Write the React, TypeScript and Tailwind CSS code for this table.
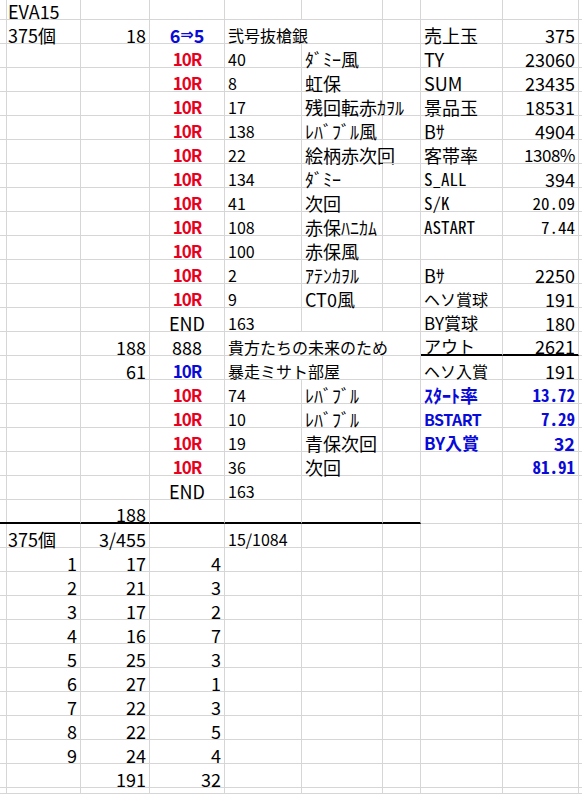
import type { ReactNode } from "react";

type Align = "l" | "r" | "c";
type Cell = { c: number; t: ReactNode; a?: Align; s?: number; k?: string };

const RED = "text-[#e8001c] font-bold text-[17px] tracking-[-1px]";
const BLUE = "text-[#0a0ad8] font-bold";
const SM = "text-[16px]";
const MONO = "font-['Noto_Sans_Mono_CJK_JP','DejaVu_Sans_Mono',monospace] text-[17px]";

const cols = ["w-[5px]", "w-[76px]", "w-[69px]", "w-[75px]", "w-[77px]", "w-[81px]", "w-[38px]", "w-[82px]", "w-[76px]", "w-[3px]"];
const spans: Record<number, string> = { 2: "col-span-2", 3: "col-span-3" };

const r10 = (num: string, name: string, label = "", value = "", blue = false, lk = "", vk = ""): Cell[] => [
  { c: 3, t: "10R", a: "c", k: RED },
  { c: 4, t: num, k: SM },
  { c: 5, t: name },
  { c: 7, t: label, k: (blue ? BLUE + " " : "") + lk },
  { c: 8, t: value, a: "r", k: (blue ? BLUE + " " : "") + vk },
];

const rows: { cells: Cell[]; line?: "gh" | "left"; h?: string }[] = [
  { cells: [{ c: 1, t: "EVA15" }], h: "h-[20px]" },
  {
    cells: [
      { c: 1, t: "375個" },
      { c: 2, t: "18", a: "r" },
      {
        c: 3,
        t: (
          <>
            6<span className="font-['DejaVu_Sans',sans-serif] text-[16px]">⇒</span>5
          </>
        ),
        a: "c",
        k: BLUE,
      },
      { c: 4, t: "弐号抜槍銀", s: 2, k: SM },
      { c: 7, t: "売上玉" },
      { c: 8, t: "375", a: "r" },
    ],
  },
  { cells: r10("40", "ﾀﾞﾐｰ風", "TY", "23060") },
  { cells: r10("8", "虹保", "SUM", "23435") },
  { cells: r10("17", "残回転赤ｶｦﾙ", "景品玉", "18531") },
  { cells: r10("138", "ﾚﾊﾞﾌﾞﾙ風", "Bｻ", "4904") },
  { cells: r10("22", "絵柄赤次回", "客帯率", "1308%", false, "", "text-[17px] tracking-[-0.5px]") },
  { cells: r10("134", "ﾀﾞﾐｰ", "S_ALL", "394", false, MONO) },
  { cells: r10("41", "次回", "S/K", "20.09", false, MONO, MONO) },
  { cells: r10("108", "赤保ﾊﾆｶﾑ", "ASTART", "7.44", false, MONO, MONO) },
  { cells: r10("100", "赤保風") },
  { cells: r10("2", "ｱﾃﾝｶｦﾙ", "Bｻ", "2250") },
  { cells: r10("9", "CT0風", "ヘソ賞球", "191", false, SM) },
  {
    cells: [
      { c: 3, t: "END", a: "c" },
      { c: 4, t: "163", k: SM },
      { c: 7, t: "BY賞球", k: "text-[17px]" },
      { c: 8, t: "180", a: "r" },
    ],
  },
  {
    cells: [
      { c: 2, t: "188", a: "r" },
      { c: 3, t: "888", a: "c" },
      { c: 4, t: "貴方たちの未来のため", s: 3, k: SM },
      { c: 7, t: "アウト", k: "text-[17px]" },
      { c: 8, t: "2621", a: "r" },
    ],
    line: "gh",
  },
  {
    cells: [
      { c: 2, t: "61", a: "r" },
      { c: 3, t: "10R", a: "c", k: "text-[#0a0ad8] font-bold text-[17px] tracking-[-1px]" },
      { c: 4, t: "暴走ミサト部屋", s: 2, k: SM },
      { c: 7, t: "ヘソ入賞", k: SM },
      { c: 8, t: "191", a: "r" },
    ],
  },
  { cells: r10("74", "ﾚﾊﾞﾌﾞﾙ", "ｽﾀｰﾄ率", "13.72", true, "", MONO) },
  { cells: r10("10", "ﾚﾊﾞﾌﾞﾙ", "BSTART", "7.29", true, "text-[16px] tracking-[-0.5px]", MONO) },
  { cells: r10("19", "青保次回", "BY入賞", "32", true, "text-[17px]") },
  { cells: r10("36", "次回", "", "81.91", true, "", MONO) },
  {
    cells: [
      { c: 3, t: "END", a: "c" },
      { c: 4, t: "163", k: SM },
    ],
  },
  { cells: [{ c: 2, t: "188", a: "r" }], line: "left" },
  {
    cells: [
      { c: 1, t: "375個" },
      { c: 2, t: "3/455", a: "r" },
      { c: 4, t: "15/1084", k: SM },
    ],
  },
  ...[
    ["1", "17", "4"],
    ["2", "21", "3"],
    ["3", "17", "2"],
    ["4", "16", "7"],
    ["5", "25", "3"],
    ["6", "27", "1"],
    ["7", "22", "3"],
    ["8", "22", "5"],
    ["9", "24", "4"],
  ].map(([n, a, b]) => ({
    cells: [
      { c: 1, t: n, a: "r" as Align },
      { c: 2, t: a, a: "r" as Align },
      { c: 3, t: b, a: "r" as Align },
    ],
  })),
  {
    cells: [
      { c: 2, t: "191", a: "r" },
      { c: 3, t: "32", a: "r" },
    ],
  },
  { cells: [], h: "h-[6px]" },
];

function Row({ cells, line, h }: { cells: Cell[]; line?: "gh" | "left"; h?: string }) {
  const out = [];
  let col = 0;
  while (col < cols.length) {
    const cell = cells.find((x) => x.c === col);
    const span = cell?.s ?? 1;
    const dark = (line === "gh" && (col === 7 || col === 8)) || (line === "left" && col <= 6);
    const align = cell?.a === "r" ? "justify-end" : cell?.a === "c" ? "justify-center" : "justify-start";
    out.push(
      <div
        key={col}
        className={`flex items-end ${align} ${span > 1 ? spans[span] : ""} border-r border-[#d6d6d6] ${
          dark ? "border-b-2 border-b-black" : "border-b"
        } px-[3px] pb-[1px] whitespace-nowrap overflow-visible leading-[14px] ${cell?.k ?? ""}`}
      >
        {cell?.t}
      </div>
    );
    col += span;
  }
  return <div className={`grid grid-cols-[5px_76px_69px_75px_77px_81px_38px_82px_76px_3px] ${h ?? "h-[24px]"}`}>{out}</div>;
}

export default function App() {
  return (
    <div className="w-[582px] h-[794px] overflow-hidden bg-white text-black text-[18px] font-['Noto_Sans_CJK_JP',sans-serif]">
      {rows.map((r, i) => (
        <Row key={i} {...r} />
      ))}
    </div>
  );
}
